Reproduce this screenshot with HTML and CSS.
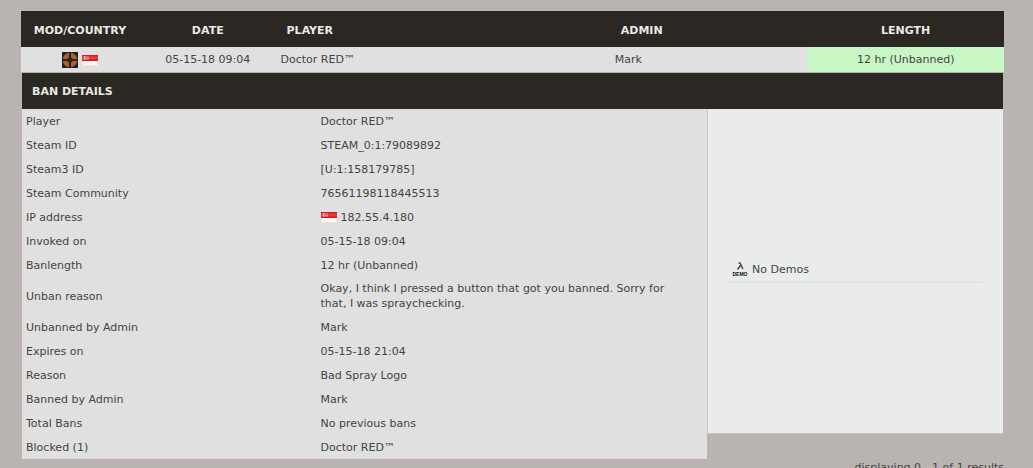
FILE: index.html
```html
<!DOCTYPE html>
<html lang="en">
<head>
<meta charset="utf-8">
<title>Ban list</title>
<link rel="stylesheet" href="styles.css">
</head>
<body>
<svg class="defs" aria-hidden="true">
  <defs>
    <linearGradient id="red" x1="0" y1="0" x2="0" y2="1">
      <stop offset="0" stop-color="#c8141c"/>
      <stop offset="0.5" stop-color="#ee4448"/>
      <stop offset="1" stop-color="#cc0c12"/>
    </linearGradient>
    <symbol id="flag-sg" viewBox="0 0 16 11">
      <rect width="16" height="11" fill="#ece6e0"/>
      <rect x="1" y="6" width="14" height="4" fill="#faf7f2"/>
      <rect width="16" height="6" fill="url(#red)"/>
      <rect x="1" y="1" width="6" height="4" fill="#e4585c"/>
      <path d="M3.500 1.500h-1v2.500h1" fill="none" stroke="#f4b8b8"/>
      <path d="M5 2h1v1h-1zM4 3h1v1h-1zM6 3h1v1h-1z" fill="#f2a8a8"/>
    </symbol>
  </defs>
</svg>
<main class="page">
  <table class="bans">
    <colgroup><col class="c-mod"><col class="c-date"><col class="c-player"><col class="c-admin"><col class="c-length"></colgroup>
    <thead>
      <tr><th class="center">MOD/COUNTRY</th><th class="center">DATE</th><th>PLAYER</th><th>ADMIN</th><th class="center">LENGTH</th></tr>
    </thead>
    <tbody>
      <tr>
        <td class="game"><div class="icons">
          <svg class="mod" viewBox="0 0 16 16" role="img" aria-label="Team Fortress 2">
            <rect width="16" height="16" fill="#262423"/>
            <circle cx="8" cy="8" r="5" fill="none" stroke="#b0602a" stroke-width="4.600"/>
            <path d="M8 0v16M0 8h16" stroke="#262423" stroke-width="2"/>
          </svg>
          <svg class="flag" role="img" aria-label="Singapore"><use href="#flag-sg"/></svg>
        </div></td>
        <td class="center">05-15-18 09:04</td>
        <td>Doctor RED™</td>
        <td>Mark</td>
        <td class="center unbanned">12 hr (Unbanned)</td>
      </tr>
    </tbody>
  </table>
  <section class="details">
    <h2>BAN DETAILS</h2>
    <div class="detail-body">
      <table class="facts">
        <tbody>
          <tr><th scope="row">Player</th><td>Doctor RED™</td></tr>
          <tr><th scope="row">Steam ID</th><td>STEAM_0:1:79089892</td></tr>
          <tr><th scope="row">Steam3 ID</th><td>[U:1:158179785]</td></tr>
          <tr><th scope="row">Steam Community</th><td>76561198118445513</td></tr>
          <tr><th scope="row">IP address</th><td><div class="ip"><svg class="flag" role="img" aria-label="Singapore"><use href="#flag-sg"/></svg>182.55.4.180</div></td></tr>
          <tr><th scope="row">Invoked on</th><td>05-15-18 09:04</td></tr>
          <tr><th scope="row">Banlength</th><td>12 hr (Unbanned)</td></tr>
          <tr><th scope="row">Unban reason</th><td>Okay, I think I pressed a button that got you banned. Sorry for that, I was spraychecking.</td></tr>
          <tr><th scope="row">Unbanned by Admin</th><td>Mark</td></tr>
          <tr><th scope="row">Expires on</th><td>05-15-18 21:04</td></tr>
          <tr><th scope="row">Reason</th><td>Bad Spray Logo</td></tr>
          <tr><th scope="row">Banned by Admin</th><td>Mark</td></tr>
          <tr><th scope="row">Total Bans</th><td>No previous bans</td></tr>
          <tr><th scope="row">Blocked (1)</th><td>Doctor RED™</td></tr>
        </tbody>
      </table>
      <aside class="side">
        <div class="demos">
          <svg class="demo-icon" viewBox="0 0 16 16" aria-hidden="true">
            <path d="M6.500 2h1.500l3 6M8.500 4.500l-3 4" fill="none" stroke="#4a4234" stroke-width="1.400"/>
            <text x="8" y="15" class="demo-word">DEMO</text>
          </svg>
          <span>No Demos</span>
        </div>
      </aside>
    </div>
  </section>
  <p class="results">displaying 0 - 1 of 1 results</p>
</main>
</body>
</html>
```
FILE: styles.css
```css
html,
body {
  height: 100%;
  margin: 0;
  overflow: hidden;
}

body {
  background: #b9b4b1;
  color: #444;
  font: 11px/15px "DejaVu Sans", sans-serif;
}

.defs {
  position: absolute;
  width: 0;
  height: 0;
}

.page {
  padding: 11px 29px 0 21px;
}

table {
  width: 100%;
  border-collapse: collapse;
}

th,
td {
  padding: 4px;
  text-align: left;
}

.bans {
  table-layout: fixed;
}

.c-mod { width: 12%; }
.c-date { width: 14%; }
.c-player { width: 34%; }
.c-admin { width: 20%; }
.c-length { width: 20%; }

.bans thead {
  background: #2b2722;
  color: #e9e9e5;
}

.bans th {
  height: 36px;
  box-sizing: border-box;
  padding: 2px 10px 0;
}

.bans .center {
  text-align: center;
}

.bans td {
  height: 26px;
  box-sizing: border-box;
  padding: 3px 4px 5px;
  background: #e0e0e0;
  box-shadow: inset 0 -1px #b5b2af;
}

.bans .game {
  padding: 4px;
}

.bans .unbanned {
  background: #c8f7c5;
}

.icons,
.ip,
.demos {
  display: flex;
  align-items: center;
  gap: 4px;
}

.icons {
  justify-content: center;
}

.mod {
  width: 16px;
  height: 16px;
}

.flag {
  width: 16px;
  height: 11px;
}

.details {
  margin: 0 1px;
}

.details h2 {
  margin: 0;
  padding: 11px 10px 10px;
  background: #2b2722;
  color: #e9e9e5;
  font-size: 11px;
  line-height: 15px;
}

.detail-body {
  display: flex;
}

.facts {
  flex: 1;
  background: #e0e0e0;
}

.facts th,
.facts td {
  height: 24px;
  box-sizing: border-box;
}

.facts th {
  width: 43%;
  font-weight: normal;
}

.facts td {
  padding-right: 20px;
}

.side {
  width: 296px;
  box-sizing: border-box;
  display: flex;
  flex-direction: column;
  justify-content: center;
  margin-bottom: 25px;
  padding: 0 20px 3px;
  border-left: 1px solid #c8cac9;
  border-bottom: 1px solid #c8cac9;
  background: #e9eceb;
}

.demos {
  padding: 5px 4px;
  border-bottom: 1px solid #dcdedd;
}

.demo-icon {
  width: 16px;
  height: 16px;
}

.demo-word {
  fill: #111;
  font: bold 5px "Liberation Sans", sans-serif;
  text-anchor: middle;
}

.results {
  margin: 0;
  padding-top: 1px;
  text-align: right;
}
```
